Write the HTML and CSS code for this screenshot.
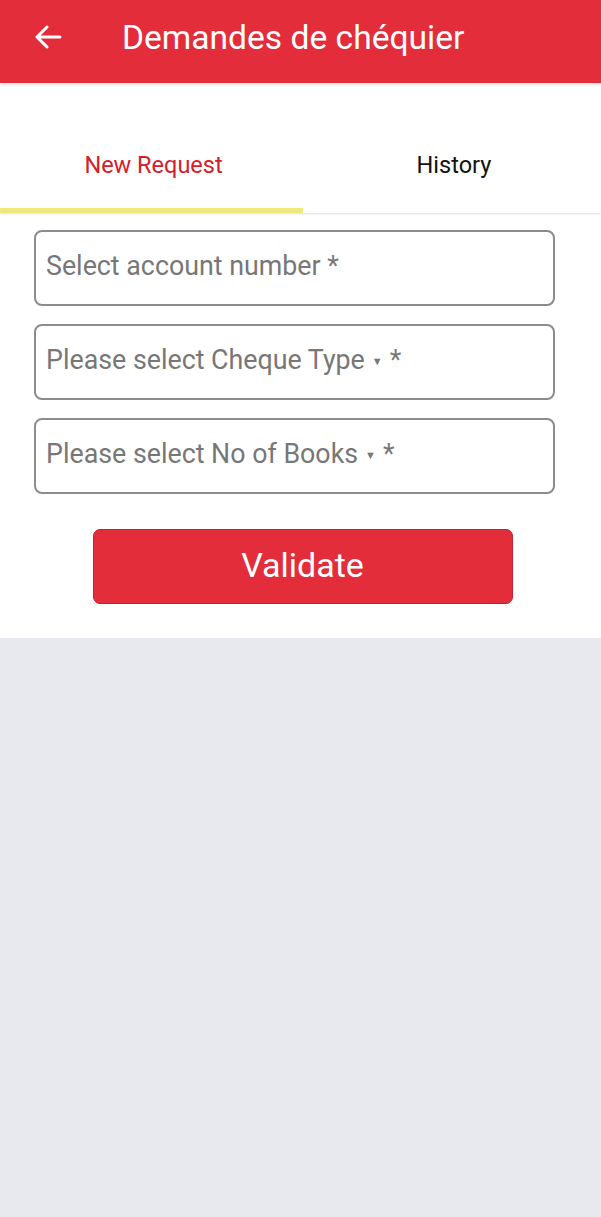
FILE: index.html
```html
<!DOCTYPE html>
<html lang="fr">
<head>
<meta charset="utf-8">
<title>Demandes de chéquier</title>
<link rel="stylesheet" href="styles.css">
</head>
<body>
<div class="app">
  <header class="topbar">
    <span class="back" aria-label="Retour">
      <svg width="28" height="24" viewBox="0 0 28 24"><path d="M26 12H3M13 2L3 12l10 10" fill="none" stroke="#fff" stroke-width="3" stroke-linecap="round" stroke-linejoin="round"/></svg>
    </span>
    <h1 class="title">Demandes de chéquier</h1>
  </header>
  <nav class="tabs">
    <div class="tab active">New Request</div>
    <div class="tab">History</div>
  </nav>
  <main class="form">
    <div class="field">Select account number *</div>
    <div class="field">Please select Cheque Type <span class="caret">▼</span> *</div>
    <div class="field">Please select No of Books <span class="caret">▼</span> *</div>
    <div class="btn-row"><button class="validate">Validate</button></div>
  </main>
  <div class="rest"></div>
</div>
</body>
</html>
```
FILE: styles.css
```css
html, body {
  margin: 0;
  padding: 0;
  height: 100%;
  background: #e8e9ee;
  font-family: Roboto, "Noto Sans", sans-serif;
}
.app {
  display: flex;
  flex-direction: column;
  min-height: 100%;
}
.topbar {
  height: 83px;
  background: #e32d3b;
  display: flex;
  align-items: center;
  padding-left: 34px;
  box-shadow: 0 2px 3px rgba(0,0,0,0.12);
  position: relative;
  z-index: 2;
}
.back {
  display: flex;
  width: 28px;
  height: 24px;
  margin-top: -10px;
}
.title {
  margin: -8px 0 0 60px;
  font-weight: 400;
  font-size: 33.6px;
  color: #fff;
}
.tabs {
  background: #fff;
  display: flex;
  height: 130px;
  box-shadow: 0 1px 2px rgba(0,0,0,0.12);
  position: relative;
  z-index: 1;
}
.tab {
  flex: 1;
  display: flex;
  align-items: center;
  justify-content: center;
  padding-top: 46px;
  padding-bottom: 8px;
  padding-left: 4px;
  box-sizing: border-box;
  font-size: 23.5px;
  color: #111;
  border-bottom: 5px solid transparent;
}
.tab.active {
  flex: 0 0 303px;
  color: #d4202a;
  border-bottom-color: #efe87c;
}
.form {
  background: #fff;
  padding: 17px 46px 34px 34px;
  display: flex;
  flex-direction: column;
  gap: 18px;
}
.field {
  height: 76px;
  box-sizing: border-box;
  border: 2px solid #8c8c8c;
  border-radius: 8px;
  padding: 0 10px 4px;
  display: flex;
  align-items: center;
  gap: 7px;
  font-size: 26.8px;
  color: #777;
}
.caret {
  font-size: 11px;
  color: #777;
  margin-top: 2px;
}
.btn-row {
  display: flex;
  justify-content: center;
  padding-top: 17px;
  padding-left: 16px;
}
.validate {
  width: 420px;
  height: 75px;
  background: #e32d3b;
  border: 1px solid #c82030;
  border-radius: 7px;
  color: #fff;
  font-family: Roboto, "Noto Sans", sans-serif;
  font-size: 34px;
  padding: 0 0 4px;
}
.rest {
  flex: 1;
  background: #e8e9ee;
}
```
